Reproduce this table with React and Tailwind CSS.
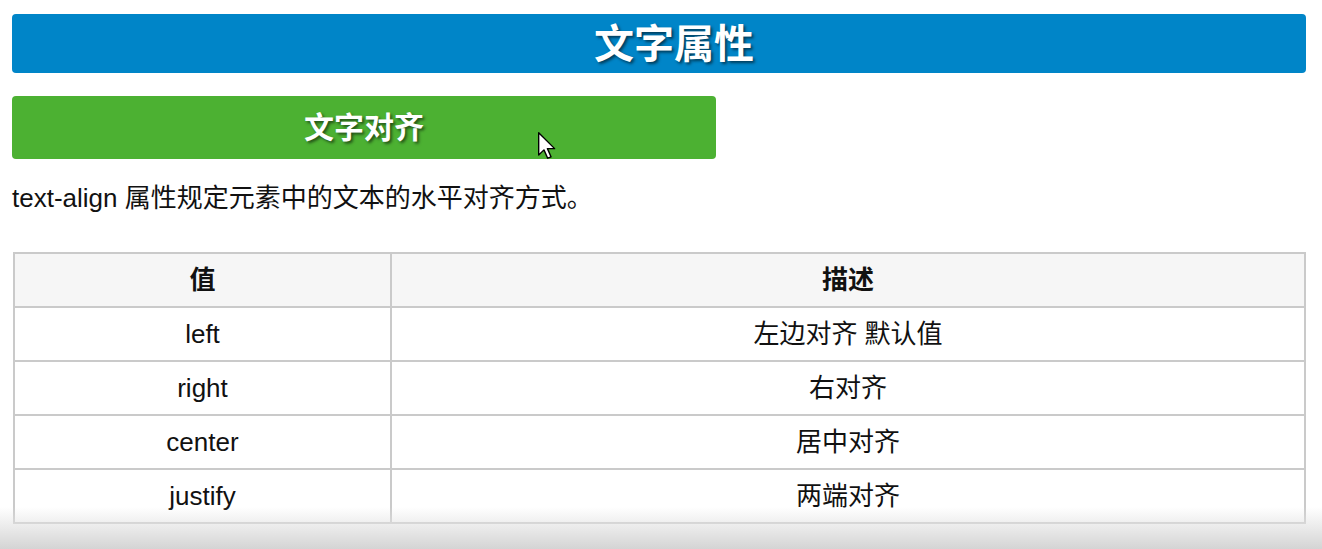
import React from "react";

const rows = [
  { value: "left", desc: "左边对齐 默认值" },
  { value: "right", desc: "右对齐" },
  { value: "center", desc: "居中对齐" },
  { value: "justify", desc: "两端对齐" },
];

const Cursor = () => (
  <svg
    className="absolute left-[538px] top-[132px] pointer-events-none"
    width="18"
    height="28"
    viewBox="0 0 13 20"
  >
    <path
      d="M0.5 0.5 L0.5 16.5 L4.3 12.8 L7 18.8 L9.4 17.8 L6.8 11.9 L12 11.9 Z"
      fill="#fff"
      stroke="#000"
      strokeWidth="1"
      strokeLinejoin="round"
    />
  </svg>
);

const App = () => {
  return (
    <div
      className="relative w-[1322px] h-[549px] overflow-hidden bg-white text-black"
      style={{ fontFamily: '"Liberation Sans", "Noto Sans CJK SC", sans-serif' }}
    >
      <div className="ml-[12px] w-[1294px] pt-[14px]">
        {/* Page title */}
        <h1 className="h-[59px] flex items-center justify-center pl-[30px] rounded-[4px] bg-[#0085c8] text-white text-[40px] font-bold [text-shadow:2px_2px_3px_rgba(0,0,0,0.55)]">
          文字属性
        </h1>

        {/* Section heading */}
        <h2 className="mt-[23px] w-[704px] h-[63px] flex items-center justify-center rounded-[4px] bg-[#4cb132] text-white text-[30px] font-bold [text-shadow:2px_2px_3px_rgba(0,0,0,0.55)]">
          文字对齐
        </h2>

        <p className="mt-[21px] text-[26px] leading-[36px] text-[#111]">
          text-align 属性规定元素中的文本的水平对齐方式。
        </p>

        {/* Values table */}
        <table className="mt-[36px] ml-[1px] w-[1293px] border-collapse border-2 border-[#cacaca] text-[26px] text-[#111]">
          <thead>
            <tr className="bg-[#f6f6f6]">
              <th className="w-[377px] h-[54px] border-2 border-[#cacaca] font-bold text-center">值</th>
              <th className="h-[54px] border-2 border-[#cacaca] font-bold text-center">描述</th>
            </tr>
          </thead>
          <tbody>
            {rows.map((r) => (
              <tr key={r.value}>
                <td className="h-[54px] border-2 border-[#cacaca] text-center">{r.value}</td>
                <td className="h-[54px] border-2 border-[#cacaca] text-center">{r.desc}</td>
              </tr>
            ))}
          </tbody>
        </table>
      </div>

      <Cursor />

      {/* bottom fade */}
      <div className="absolute left-0 right-0 bottom-0 h-[42px] pointer-events-none bg-gradient-to-b from-[rgba(255,255,255,0)] via-[rgba(225,225,225,0.7)] to-[#d4d4d4]" />
    </div>
  );
};

export default App;
